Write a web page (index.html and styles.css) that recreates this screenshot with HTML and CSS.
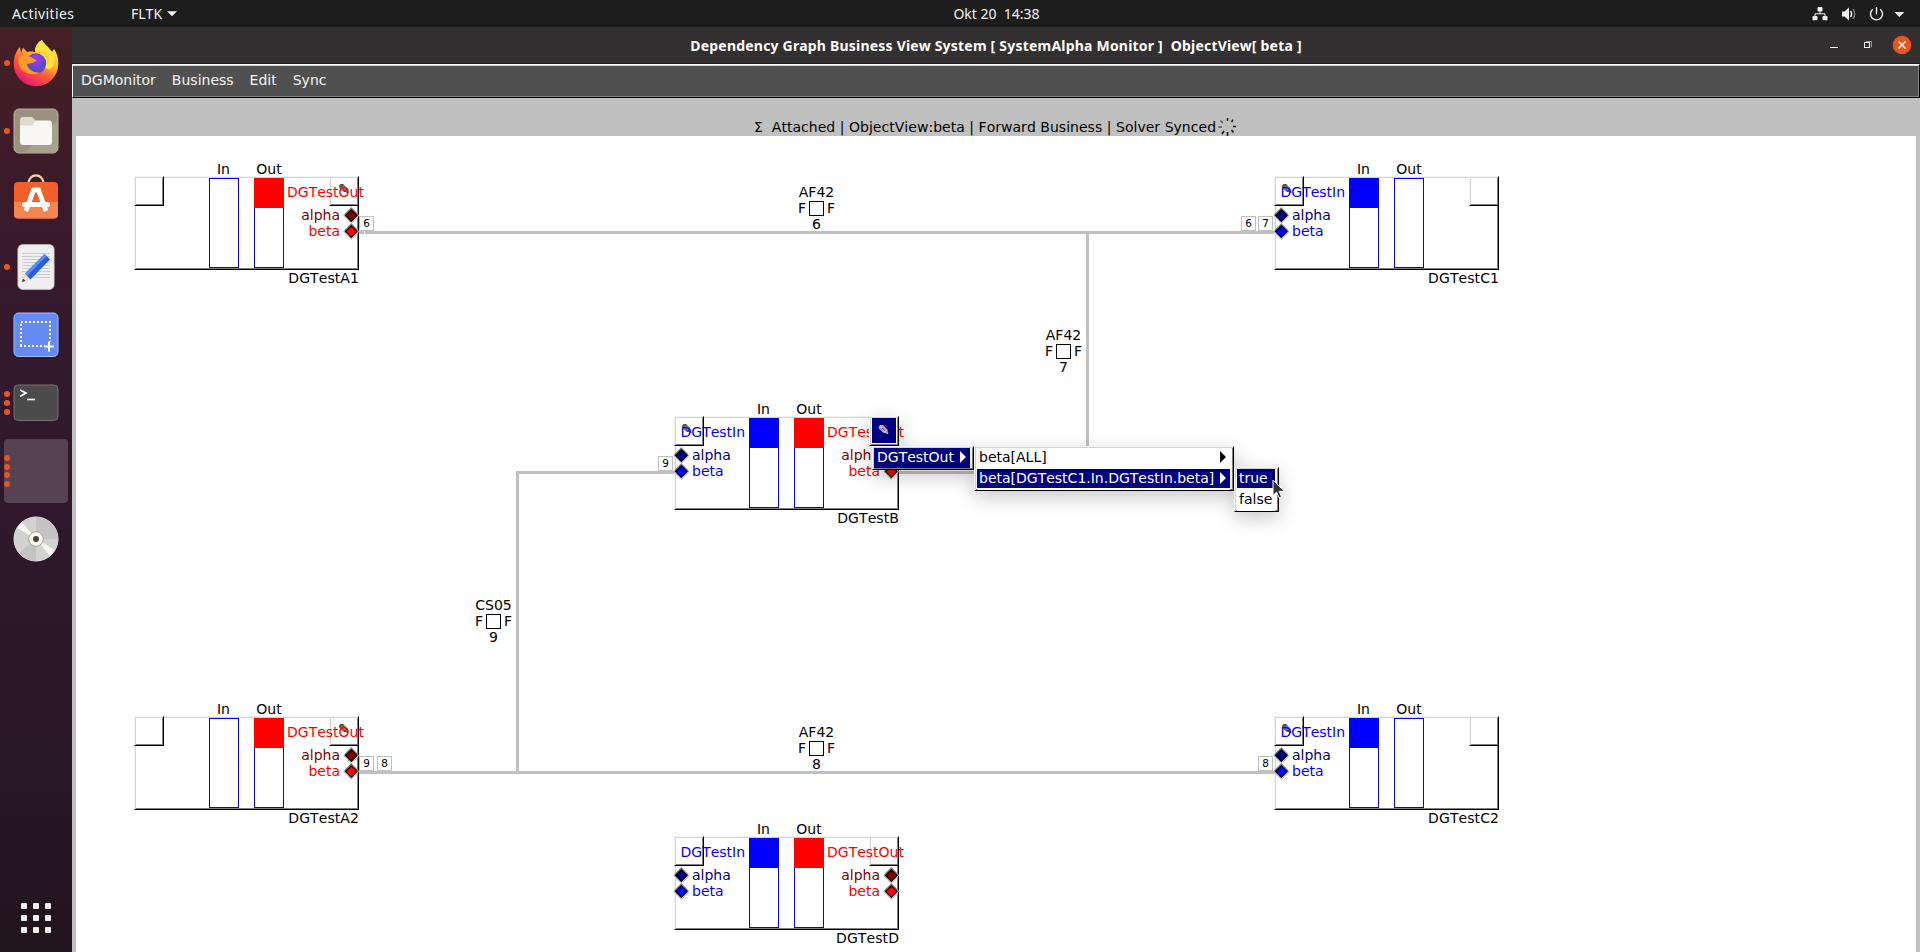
FILE: index.html
```html
<!DOCTYPE html>
<html lang="en">
<head>
<meta charset="utf-8">
<title>Dependency Graph Business View System</title>
<link rel="stylesheet" href="styles.css">
</head>
<body>
<header class="topbar">
  <span class="activities">Activities</span>
  <span class="appname">FLTK</span>
  <svg class="app-arrow" width="10" height="6" viewBox="0 0 10 6"><path d="M0 .3H10L5 5.3Z" fill="#f2f2f2"/></svg>
  <span class="clock">Okt 20&nbsp; 14:38</span>
  <svg class="tray" width="94" height="16" viewBox="0 0 94 16">
    <g fill="#f2f2f2">
      <rect x="5.5" y="1" width="5" height="4.5" rx="1"/><rect x=".5" y="10" width="5" height="4.3" rx="1"/><rect x="10.500" y="10" width="5" height="4.300" rx="1"/>
      <path d="M30 5.500h2.500L37 1.500v13L32.500 10.500H30Z"/>
      <path d="M82.300 6h10l-5 5Z"/>
    </g>
    <g fill="none" stroke="#f2f2f2">
      <path d="M8 5v3M3 10.500V7.800H13V10.500"/>
      <path d="M38.500 5q2.200 3 0 6" stroke-width="1.500"/><path d="M41 3q3.400 5 0 10" stroke="#888" stroke-width="1.300"/>
      <path d="M60.800 3.200a6 6 0 1 0 7.400 0" stroke-width="1.400"/><path d="M64.500 1v7.500" stroke-width="1.400"/>
    </g>
  </svg>
</header>
<div class="desktop">
  <nav class="dock">
    <div class="slot"><i class="dots"><b></b></i>
      <svg width="46" height="48" viewBox="0 0 46 48">
        <defs>
          <linearGradient id="fx" x1=".85" y1=".1" x2=".3" y2="1"><stop offset="0" stop-color="#fff044"/><stop offset=".35" stop-color="#ffb52a"/><stop offset=".62" stop-color="#ff5a38"/><stop offset="1" stop-color="#e5156f"/></linearGradient>
          <radialGradient id="fp" cx=".5" cy=".3"><stop offset="0" stop-color="#a53be0"/><stop offset="1" stop-color="#5849cf"/></radialGradient>
        </defs>
        <path d="M29 1C31 6 36 8 39 13L41 10C44 14 45.500 19 45.300 25A22.300 22.300 0 0 1 .7 25C.5 18 3 12 7 8L8 14 10 8.500 14 13C19 12 21 13 22 13 22 8 25 3 29 1Z" fill="url(#fx)"/>
        <path d="M29 1C31 6 43 12 41 24 40 31 34 32 31 27 35 20 27 15 22 12 22 7 25 3 29 1Z" fill="#ffe13f"/>
        <circle cx="23" cy="24.500" r="10.200" fill="url(#fp)"/>
        <path d="M5 20C9 13 17 17 23 21 23 24 17 24 14 25 15 31 22 35 28 33 16 39 5 32 5 20Z" fill="#ff9a24"/>
        <path d="M24 14C31 13 36 19 34 27 38 22 36 14 29 12Z" fill="#ffcb3b"/>
      </svg>
    </div>
    <div class="slot"><i class="dots"><b></b></i>
      <svg width="46" height="46" viewBox="0 0 46 46"><rect x="1" y="1" width="44" height="44" rx="5" fill="#9a927e" stroke="#b7b3a2"/><path d="M45 12 12 45H40q5 0 5-5Z" fill="#a8a18e"/><path d="M7 12q0-3 3-3H19l4 4H36V20H7Z" fill="#dfdbcf"/><path d="M7 17.500H19.500L23 12.500H36q3 0 3 3V34q0 3-3 3H10q-3 0-3-3Z" fill="#f8f7f5"/></svg>
    </div>
    <div class="slot store">
      <svg width="46" height="48" viewBox="0 0 46 48"><path d="M15.500 11C15.500-.5 30.500-.5 30.500 11" fill="none" stroke="#f3d4ad" stroke-width="2.200"/><rect x="1" y="9" width="44" height="36.500" rx="4" fill="#f1602a"/><path d="M1 29H45V41q0 4.500-4.500 4.500h-35Q1 45.500 1 41Z" fill="#f3854f"/><path d="M13 38 20.500 17H25.500L33 38" fill="none" stroke="#fff" stroke-width="4.800"/><rect x="9" y="29" width="28" height="5" rx="2.500" fill="#fff"/></svg>
    </div>
    <div class="slot"><i class="dots"><b></b></i>
      <svg width="46" height="46" viewBox="0 0 46 46"><rect x="5" y=".8" width="36" height="44.500" rx="4.500" fill="#efefef" stroke="#d4d2d2"/><path d="M9 9.500H37M9 12.500H37M9 15.500H37M9 18.500H37M9 21.500H37M9 24.500H37M9 27.500H37M9 30.500H37M9 33.500H37" stroke="#ccc"/><path d="M9 38 12 29 18 35Z" fill="#ffdcb7"/><path d="M9 38 10 34.500 12.500 37Z" fill="#333"/><path d="M12 29.500 31.500 10 37 15.500 17.500 35.500Z" fill="#285fd6"/><path d="M12 29.500 31.500 10 33.500 12 14 32Z" fill="#5b91f0"/></svg>
    </div>
    <div class="slot">
      <svg width="46" height="46" viewBox="0 0 46 46"><rect x="1" y="1" width="44" height="43.500" rx="4.500" fill="#638bf3" stroke="#a5bffa"/><path d="M8 34V10H37V30M7 34H32" fill="none" stroke="#fff" stroke-width="2" stroke-dasharray="2 2"/><path d="M31 34.500H41M36 29.500V39.500" stroke="#fff" stroke-width="2"/></svg>
    </div>
    <div class="slot"><i class="dots"><b></b><b></b><b></b></i>
      <svg width="46" height="38" viewBox="0 0 46 38"><rect x="1" y="1" width="44" height="35.500" rx="4" fill="#4b4b4b" stroke="#727070"/><path d="M7 6 13 9 7 12.500" fill="none" stroke="#fff" stroke-width="1.600"/><path d="M14 15.500H22" stroke="#fff" stroke-width="1.600"/></svg>
    </div>
    <div class="slot running"><i class="dots"><b></b><b></b><b></b><b></b></i></div>
    <div class="slot">
      <svg width="46" height="46" viewBox="0 0 46 46"><circle cx="23" cy="23" r="22" fill="#d2d2d2" stroke="#e2e2e2"/><path d="M23 23V1A22 22 0 0 1 40 9ZM23 23V45A22 22 0 0 1 6 37ZM23 23H45A22 22 0 0 0 40 9Z" fill="#c3c3c3"/><path d="M23 23 4 12 9 6ZM23 23 42 34 37 40Z" fill="#f7f7f7"/><circle cx="23" cy="23" r="7.300" fill="#f6f5ef" stroke="#aaa48f"/><circle cx="23" cy="23" r="3" fill="#454545"/></svg>
    </div>
    <div class="apps"><b></b><b></b><b></b><b></b><b></b><b></b><b></b><b></b><b></b></div>
  </nav>
  <main class="window">
    <div class="titlebar">
      <span class="title">Dependency Graph Business View System [ SystemAlpha Monitor ]&nbsp; ObjectView[ beta ]</span>
      <svg class="controls" width="84" height="22" viewBox="0 0 84 22"><path d="M2 13.500H10" stroke="#fff"/><path d="M38 8V7.500H43.500V13H43" fill="none" stroke="#999"/><rect x="36.500" y="8.500" width="5" height="5" fill="none" stroke="#fff"/><circle cx="74" cy="11" r="9.300" fill="#e95420"/><path d="M70.500 7.500 77.500 14.500M77.500 7.500 70.500 14.500" stroke="#fff" stroke-width="1.500"/></svg>
    </div>
    <div class="menubar"><span>DGMonitor</span><span>Business</span><span>Edit</span><span>Sync</span></div>
    <div class="status">
      <span>Σ&nbsp; Attached | ObjectView:beta | Forward Business | Solver Synced</span>
      <svg width="20" height="19" viewBox="0 0 20 19"><g stroke="#111" stroke-width="1.500"><path d="M10.500 4V1"/><path d="M14.500 5 16 2.700"/><path d="M16 9.500H19"/><path d="M14.500 13 16.500 15.500"/><path d="M10.500 15V19"/><path d="M7 14 5 17"/><path d="M5 10H1.500" stroke="#555"/><path d="M6 6 3.500 3.500" stroke="#555"/></g></svg>
    </div>
    <section class="canvas">
      <svg class="wires" width="1840" height="816" viewBox="0 0 1840 816"><g fill="#c0c0c0"><rect x="283" y="95" width="915" height="3"/><rect x="1010" y="98" width="3" height="240"/><rect x="823" y="335" width="190" height="3"/><rect x="440" y="335" width="158" height="3"/><rect x="440" y="338" width="3" height="297"/><rect x="283" y="635" width="915" height="3"/></g><path d="M288.500 95V98" stroke="#fff"/></svg>

      <div class="edge e6"><span>AF42</span><div>F<i></i>F</div><span>6</span></div>
      <div class="edge e7"><span>AF42</span><div>F<i></i>F</div><span>7</span></div>
      <div class="edge e9"><span>CS05</span><div>F<i></i>F</div><span>9</span></div>
      <div class="edge e8"><span>AF42</span><div>F<i></i>F</div><span>8</span></div>

      <article class="node a1">
        <div class="box"><i class="corner"></i><i class="corner right"></i></div>
        <span class="cap in">In</span><span class="cap out">Out</span>
        <i class="col in"></i><i class="col out red"></i>
        <span class="pencil right">✎</span>
        <span class="ports-out">DGTestOut</span>
        <div class="pins out"><p class="dark">alpha<i></i></p><p>beta<i></i></p></div>
        <div class="tags after"><b>6</b></div>
        <span class="name">DGTestA1</span>
      </article>
      <article class="node c1">
        <div class="box"><i class="corner"></i><i class="corner right"></i></div>
        <span class="cap in">In</span><span class="cap out">Out</span>
        <i class="col in blue"></i><i class="col out"></i>
        <span class="pencil">✎</span>
        <span class="ports-in">DGTestIn</span>
        <div class="pins in"><p class="dark"><i></i>alpha</p><p><i></i>beta</p></div>
        <div class="tags before"><b>6</b><b>7</b></div>
        <span class="name">DGTestC1</span>
      </article>
      <article class="node b">
        <div class="box"><i class="corner"></i><i class="corner right"></i></div>
        <span class="cap in">In</span><span class="cap out">Out</span>
        <i class="col in blue"></i><i class="col out red"></i>
        <span class="pencil">✎</span>
        <span class="ports-in">DGTestIn</span><span class="ports-out">DGTestOut</span>
        <div class="pins in"><p class="dark"><i></i>alpha</p><p><i></i>beta</p></div>
        <div class="pins out"><p class="dark">alpha<i></i></p><p>beta<i></i></p></div>
        <div class="tags before"><b>9</b></div>
        <span class="name">DGTestB</span>
      </article>
      <article class="node a2">
        <div class="box"><i class="corner"></i><i class="corner right"></i></div>
        <span class="cap in">In</span><span class="cap out">Out</span>
        <i class="col in"></i><i class="col out red"></i>
        <span class="pencil right">✎</span>
        <span class="ports-out">DGTestOut</span>
        <div class="pins out"><p class="dark">alpha<i></i></p><p>beta<i></i></p></div>
        <div class="tags after"><b>9</b><b>8</b></div>
        <span class="name">DGTestA2</span>
      </article>
      <article class="node c2">
        <div class="box"><i class="corner"></i><i class="corner right"></i></div>
        <span class="cap in">In</span><span class="cap out">Out</span>
        <i class="col in blue"></i><i class="col out"></i>
        <span class="pencil">✎</span>
        <span class="ports-in">DGTestIn</span>
        <div class="pins in"><p class="dark"><i></i>alpha</p><p><i></i>beta</p></div>
        <div class="tags before"><b>8</b></div>
        <span class="name">DGTestC2</span>
      </article>
      <article class="node d">
        <div class="box"><i class="corner"></i><i class="corner right"></i></div>
        <span class="cap in">In</span><span class="cap out">Out</span>
        <i class="col in blue"></i><i class="col out red"></i>
        <span class="ports-in">DGTestIn</span><span class="ports-out">DGTestOut</span>
        <div class="pins in"><p class="dark"><i></i>alpha</p><p><i></i>beta</p></div>
        <div class="pins out"><p class="dark">alpha<i></i></p><p>beta<i></i></p></div>
        <span class="name">DGTestD</span>
      </article>

      <div class="menu m0"><div class="active">✎</div></div>
      <div class="menu m1"><div class="active">DGTestOut<u></u></div></div>
      <div class="menu m2"><div>beta[ALL]<u></u></div><div class="active">beta[DGTestC1.In.DGTestIn.beta]<u></u></div></div>
      <div class="menu m3"><div class="active">true</div><div>false</div></div>
      <svg class="cursor" width="14" height="20" viewBox="0 0 14 20"><path d="M1 1V16.500L4.600 13.200 7 18.800 9.500 17.800 7.200 12.300H12.300Z" fill="#333" stroke="#fff"/></svg>
    </section>
  </main>
</div>
</body>
</html>
```
FILE: styles.css
```css
* { box-sizing: border-box; }
body { margin: 0; width: 1920px; height: 952px; overflow: hidden; display: flex; flex-direction: column; font: 14px/16px "DejaVu Sans", sans-serif; font-kerning: none; color: #000; }
i { font-style: normal; }
span { white-space: pre; }

.topbar { height: 27px; flex: none; display: flex; align-items: center; background: #1d1d1d; color: #f2f2f2; font-family: "Noto Sans", sans-serif; font-size: 14px; position: relative; }
.activities { width: 131px; padding-left: 12px; letter-spacing: .4px; }
.appname { width: 36px; }
.clock { position: absolute; left: 0; right: 0; padding-left: 73px; text-align: center; }
.tray { margin-left: auto; margin-right: 14px; }

.desktop { flex: 1; display: flex; min-height: 0; }
.dock { width: 72px; flex: none; display: flex; flex-direction: column; padding-top: 2px; background: linear-gradient(#451f24 0, #3b1b2a 18%, #33192e 35%, #2d172b 60%, #281729 80%, #22141c 100%); }
.slot { position: relative; height: 68px; flex: none; display: flex; align-items: center; justify-content: center; }
.store { padding-bottom: 5px; }
.running { height: 64px; margin: 2px 4px; border-radius: 4px; background: #554252; }
.dots { position: absolute; left: 4px; top: 0; bottom: 0; display: flex; flex-direction: column; justify-content: center; gap: 2.7px; }
.running .dots { left: 0; }
.dots b { width: 6px; height: 6px; border-radius: 50%; background: #e95420; }
.apps { margin: auto 0 19px 21px; display: grid; grid-template-columns: repeat(3, 6px); gap: 6px; }
.apps b { height: 6px; border-radius: 1px; background: #f0eeec; }

.window { flex: 1; display: flex; flex-direction: column; background: #c0c0c0; }
.titlebar { height: 37px; flex: none; display: flex; align-items: center; justify-content: center; position: relative; background: #323030; border-bottom: 1px solid #1c1a1a; color: #fff; }
.title { font: bold 14px/16px "Noto Sans", sans-serif; letter-spacing: .21px; padding-top: 2px; }
.controls { position: absolute; right: 8px; top: 7px; }
.menubar { height: 34px; flex: none; display: flex; gap: 16px; align-items: center; padding-left: 8px; background: #505050; color: #f5f5f5; border-top: 1px solid #fff; border-bottom: 1px solid #000; border-left: 1px solid #fff; border-right: 1px solid #000; box-shadow: inset 0 1px #d5d5d5, inset -1px -1px #808080; padding-bottom: 2px; }
.status { height: 38px; flex: none; display: flex; align-items: flex-end; padding-left: 682px; }
.status span { width: 463px; padding-bottom: 1px; letter-spacing: .03px; }
.canvas { position: relative; flex: 1; margin: 0 4px; background: #fff; overflow: hidden; }
.wires { position: absolute; left: 0; top: 0; }

.node { position: absolute; width: 225px; height: 94px; }
.a1 { left: 58px; top: 40px; }
.a2 { left: 58px; top: 580px; }
.b { left: 598px; top: 280px; }
.c1 { left: 1198px; top: 40px; }
.c2 { left: 1198px; top: 580px; }
.d { left: 598px; top: 700px; }
.box, .corner, .menu { background: #fff; border: 1px solid; border-color: #f4f4f4 #000 #000 #f4f4f4; box-shadow: inset 1px 1px #d3d3d3, inset -1px -1px #808080; }
.box { height: 94px; position: relative; }
.corner { position: absolute; left: -1px; top: -1px; width: 30px; height: 30px; }
.corner.right { left: auto; right: -1px; }
.cap { position: absolute; top: -15px; width: 60px; text-align: center; }
.cap.in { left: 59.5px; }
.cap.out { left: 105px; }
.col { position: absolute; top: 2px; width: 30px; height: 90px; border: 1px solid #00f; }
.col.in { left: 75px; }
.col.out { left: 120px; }
.col.blue { background: linear-gradient(#00f 29px, #fff 29px); }
.col.red::before { content: ""; position: absolute; left: -1px; top: -1px; width: 30px; height: 30px; background: #f00; }
.pencil { position: absolute; left: 7px; top: 5px; font-size: 14px; line-height: 16px; color: #333; text-shadow: .5px 0 #555; }
.pencil.right { left: 204px; }
.ports-in { position: absolute; left: 6.5px; top: 8px; color: #00f; }
.ports-out { position: absolute; left: 153px; top: 8px; color: #f00; }
.pins { position: absolute; top: 31px; }
.pins.in { left: 1px; color: #00f; }
.pins.out { right: 1px; color: #f00; }
.pins p { margin: 0; height: 16px; display: flex; align-items: center; justify-content: flex-end; gap: 5px; }
.pins.in p { justify-content: flex-start; gap: 4px; }
.in .dark { color: #000080; }
.out .dark { color: #800000; }
.pins i { width: 13px; height: 16px; display: flex; align-items: center; justify-content: center; }
.pins i::before { content: ""; flex: none; width: 6.6px; height: 6.6px; transform: rotate(45deg); background: currentColor; border: 1px solid #000; box-shadow: -1px -1px 0 .4px #777, 1px 1px 0 .4px #ccc, 0 0 0 1.2px #aaa; }
.tags { position: absolute; top: 40px; display: flex; gap: 3px; }
.tags.after { left: 225px; }
.tags.before { right: 226px; gap: 2px; }
.tags b { width: 15px; height: 15px; border: 1px solid #c0c0c0; background: #fff; font: 10.5px/13px "DejaVu Sans", sans-serif; text-align: center; }
.name { position: absolute; right: 0; top: 94px; letter-spacing: .08px; }

.edge { position: absolute; width: 61px; display: flex; flex-direction: column; align-items: center; }
.edge div { display: flex; gap: 3px; }
.edge i { width: 15px; height: 15px; margin-top: 1px; border: 1px solid #000; }
.e6 { left: 710px; top: 48px; }
.e7 { left: 957px; top: 191px; }
.e9 { left: 387px; top: 461px; }
.e8 { left: 710px; top: 588px; }

.menu { position: absolute; padding: 1px 3px 1px 2px; box-shadow: inset 1px 1px #d3d3d3, inset -1px -1px #808080, 0 6px 20px rgba(0,0,0,.22); }
.menu div { height: 21px; padding: 1px 4px 0 2px; display: flex; align-items: flex-start; justify-content: space-between; border-bottom: 2px solid #fff; }
.menu .active { background: #000080; color: #fff; }
.menu u { width: 6px; height: 12px; margin-top: 2px; background: currentColor; clip-path: polygon(0 0, 100% 50%, 0 100%); }
.m0 { left: 793px; top: 280px; width: 30px; height: 30px; padding: 1px 2px; }
.menu.m0 div { height: 25px; justify-content: center; align-items: center; font-size: 14px; padding: 0 1px 2px 0; border: 0; color: #ddd; text-shadow: .5px 0 #bbb; }
.m1 { left: 796px; top: 310px; width: 102px; height: 24px; padding-left: 1px; }
.menu.m1 div { height: 20px; border: 0; padding-left: 3px; }
.m2 { left: 898px; top: 310px; width: 260px; height: 45px; }
.m3 { left: 1158px; top: 331px; width: 45px; height: 45px; }
.m3 div { padding-right: 0; }
.cursor { position: absolute; left: 1196px; top: 343px; }
```
